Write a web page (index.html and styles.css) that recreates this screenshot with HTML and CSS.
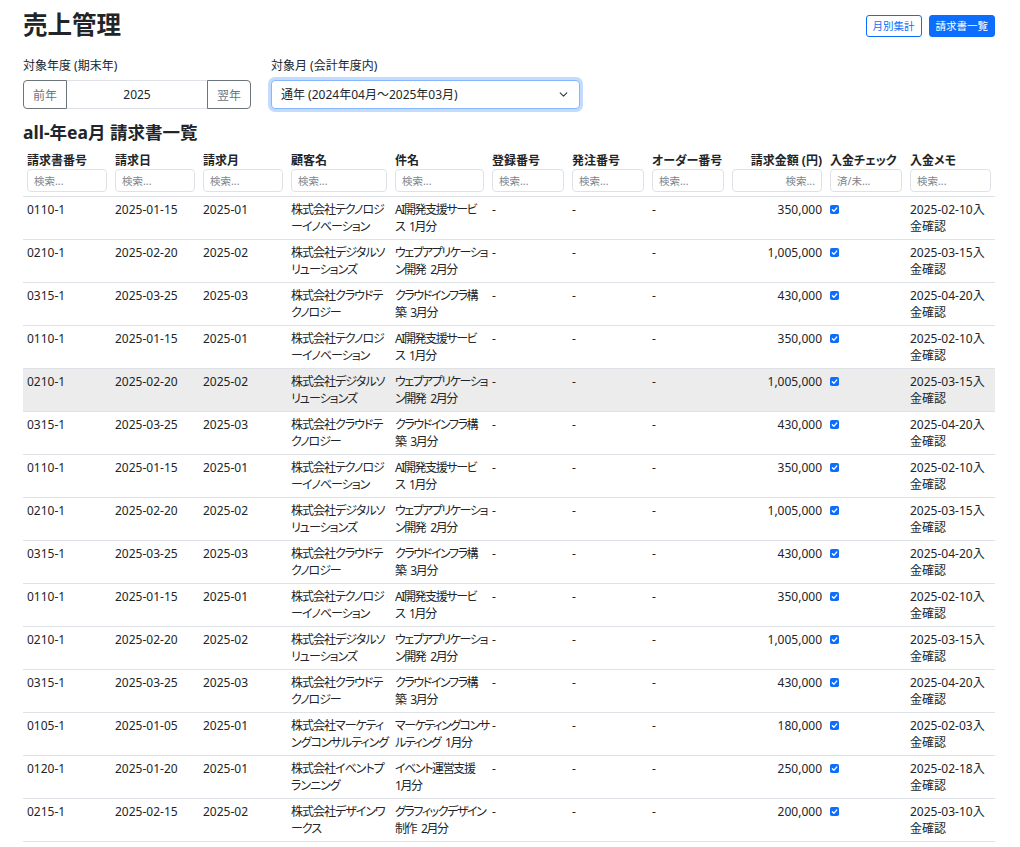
FILE: index.html
```html
<!DOCTYPE html>
<html lang="ja">
<head>
<meta charset="utf-8">
<title>売上管理</title>
<link rel="stylesheet" href="styles.css">
</head>
<body>
<div class="page">
  <header class="topbar">
    <h1 class="title">売上管理</h1>
    <div class="actions">
      <button class="btn btn-outline">月別集計</button>
      <button class="btn btn-primary">請求書一覧</button>
    </div>
  </header>

  <div class="filters">
    <div class="field field-year">
      <label class="label">対象年度 (期末年)</label>
      <div class="year-group">
        <button class="yg-btn yg-prev">前年</button>
        <input class="yg-input" value="2025" readonly>
        <button class="yg-btn yg-next">翌年</button>
      </div>
    </div>
    <div class="field field-month">
      <label class="label">対象月 (会計年度内)</label>
      <select class="month-select"><option>通年 (2024年04月～2025年03月)</option></select>
    </div>
  </div>

  <h2 class="section-title">all-年ea月 請求書一覧</h2>

  <table class="inv-table">
    <colgroup>
      <col class="c-no"><col class="c-date"><col class="c-month"><col class="c-cust"><col class="c-subj">
      <col class="c-reg"><col class="c-po"><col class="c-order"><col class="c-amt"><col class="c-chk"><col class="c-memo">
    </colgroup>
    <thead>
      <tr>
        <th><span class="th-label">請求書番号</span><input class="filter-input" placeholder="検索..."></th>
        <th><span class="th-label">請求日</span><input class="filter-input" placeholder="検索..."></th>
        <th><span class="th-label">請求月</span><input class="filter-input" placeholder="検索..."></th>
        <th><span class="th-label">顧客名</span><input class="filter-input" placeholder="検索..."></th>
        <th><span class="th-label">件名</span><input class="filter-input" placeholder="検索..."></th>
        <th><span class="th-label">登録番号</span><input class="filter-input" placeholder="検索..."></th>
        <th><span class="th-label">発注番号</span><input class="filter-input" placeholder="検索..."></th>
        <th><span class="th-label">オーダー番号</span><input class="filter-input" placeholder="検索..."></th>
        <th class="num"><span class="th-label">請求金額 (円)</span><input class="filter-input filter-num" placeholder="検索..."></th>
        <th><span class="th-label">入金チェック</span><input class="filter-input" placeholder="済/未..."></th>
        <th><span class="th-label">入金メモ</span><input class="filter-input" placeholder="検索..."></th>
      </tr>
    </thead>
    <tbody>
      <tr>
        <td>0110-1</td><td>2025-01-15</td><td>2025-01</td>
        <td class="cust">株式会社テクノロジ<br>ーイノベーション</td>
        <td class="subj">AI開発支援サービ<br>ス 1月分</td>
        <td>-</td><td>-</td><td>-</td><td class="num">350,000</td>
        <td><svg class="chk" viewBox="0 0 10 10"><rect width="10" height="10" rx="2" fill="#0d6efd"/><path d="M2.6 5.3l1.7 1.7 3.2-3.7" fill="none" stroke="#fff" stroke-width="1.4" stroke-linecap="round" stroke-linejoin="round"/></svg></td>
        <td>2025-02-10入<br>金確認</td>
      </tr>
      <tr>
        <td>0210-1</td><td>2025-02-20</td><td>2025-02</td>
        <td class="cust">株式会社デジタルソ<br>リューションズ</td>
        <td class="subj">ウェブアプリケーショ<br>ン開発 2月分</td>
        <td>-</td><td>-</td><td>-</td><td class="num">1,005,000</td>
        <td><svg class="chk" viewBox="0 0 10 10"><rect width="10" height="10" rx="2" fill="#0d6efd"/><path d="M2.6 5.3l1.7 1.7 3.2-3.7" fill="none" stroke="#fff" stroke-width="1.4" stroke-linecap="round" stroke-linejoin="round"/></svg></td>
        <td>2025-03-15入<br>金確認</td>
      </tr>
      <tr>
        <td>0315-1</td><td>2025-03-25</td><td>2025-03</td>
        <td class="cust">株式会社クラウドテ<br>クノロジー</td>
        <td class="subj">クラウドインフラ構<br>築 3月分</td>
        <td>-</td><td>-</td><td>-</td><td class="num">430,000</td>
        <td><svg class="chk" viewBox="0 0 10 10"><rect width="10" height="10" rx="2" fill="#0d6efd"/><path d="M2.6 5.3l1.7 1.7 3.2-3.7" fill="none" stroke="#fff" stroke-width="1.4" stroke-linecap="round" stroke-linejoin="round"/></svg></td>
        <td>2025-04-20入<br>金確認</td>
      </tr>
      <tr>
        <td>0110-1</td><td>2025-01-15</td><td>2025-01</td>
        <td class="cust">株式会社テクノロジ<br>ーイノベーション</td>
        <td class="subj">AI開発支援サービ<br>ス 1月分</td>
        <td>-</td><td>-</td><td>-</td><td class="num">350,000</td>
        <td><svg class="chk" viewBox="0 0 10 10"><rect width="10" height="10" rx="2" fill="#0d6efd"/><path d="M2.6 5.3l1.7 1.7 3.2-3.7" fill="none" stroke="#fff" stroke-width="1.4" stroke-linecap="round" stroke-linejoin="round"/></svg></td>
        <td>2025-02-10入<br>金確認</td>
      </tr>
      <tr class="is-hover">
        <td>0210-1</td><td>2025-02-20</td><td>2025-02</td>
        <td class="cust">株式会社デジタルソ<br>リューションズ</td>
        <td class="subj">ウェブアプリケーショ<br>ン開発 2月分</td>
        <td>-</td><td>-</td><td>-</td><td class="num">1,005,000</td>
        <td><svg class="chk" viewBox="0 0 10 10"><rect width="10" height="10" rx="2" fill="#0d6efd"/><path d="M2.6 5.3l1.7 1.7 3.2-3.7" fill="none" stroke="#fff" stroke-width="1.4" stroke-linecap="round" stroke-linejoin="round"/></svg></td>
        <td>2025-03-15入<br>金確認</td>
      </tr>
      <tr>
        <td>0315-1</td><td>2025-03-25</td><td>2025-03</td>
        <td class="cust">株式会社クラウドテ<br>クノロジー</td>
        <td class="subj">クラウドインフラ構<br>築 3月分</td>
        <td>-</td><td>-</td><td>-</td><td class="num">430,000</td>
        <td><svg class="chk" viewBox="0 0 10 10"><rect width="10" height="10" rx="2" fill="#0d6efd"/><path d="M2.6 5.3l1.7 1.7 3.2-3.7" fill="none" stroke="#fff" stroke-width="1.4" stroke-linecap="round" stroke-linejoin="round"/></svg></td>
        <td>2025-04-20入<br>金確認</td>
      </tr>
      <tr>
        <td>0110-1</td><td>2025-01-15</td><td>2025-01</td>
        <td class="cust">株式会社テクノロジ<br>ーイノベーション</td>
        <td class="subj">AI開発支援サービ<br>ス 1月分</td>
        <td>-</td><td>-</td><td>-</td><td class="num">350,000</td>
        <td><svg class="chk" viewBox="0 0 10 10"><rect width="10" height="10" rx="2" fill="#0d6efd"/><path d="M2.6 5.3l1.7 1.7 3.2-3.7" fill="none" stroke="#fff" stroke-width="1.4" stroke-linecap="round" stroke-linejoin="round"/></svg></td>
        <td>2025-02-10入<br>金確認</td>
      </tr>
      <tr>
        <td>0210-1</td><td>2025-02-20</td><td>2025-02</td>
        <td class="cust">株式会社デジタルソ<br>リューションズ</td>
        <td class="subj">ウェブアプリケーショ<br>ン開発 2月分</td>
        <td>-</td><td>-</td><td>-</td><td class="num">1,005,000</td>
        <td><svg class="chk" viewBox="0 0 10 10"><rect width="10" height="10" rx="2" fill="#0d6efd"/><path d="M2.6 5.3l1.7 1.7 3.2-3.7" fill="none" stroke="#fff" stroke-width="1.4" stroke-linecap="round" stroke-linejoin="round"/></svg></td>
        <td>2025-03-15入<br>金確認</td>
      </tr>
      <tr>
        <td>0315-1</td><td>2025-03-25</td><td>2025-03</td>
        <td class="cust">株式会社クラウドテ<br>クノロジー</td>
        <td class="subj">クラウドインフラ構<br>築 3月分</td>
        <td>-</td><td>-</td><td>-</td><td class="num">430,000</td>
        <td><svg class="chk" viewBox="0 0 10 10"><rect width="10" height="10" rx="2" fill="#0d6efd"/><path d="M2.6 5.3l1.7 1.7 3.2-3.7" fill="none" stroke="#fff" stroke-width="1.4" stroke-linecap="round" stroke-linejoin="round"/></svg></td>
        <td>2025-04-20入<br>金確認</td>
      </tr>
      <tr>
        <td>0110-1</td><td>2025-01-15</td><td>2025-01</td>
        <td class="cust">株式会社テクノロジ<br>ーイノベーション</td>
        <td class="subj">AI開発支援サービ<br>ス 1月分</td>
        <td>-</td><td>-</td><td>-</td><td class="num">350,000</td>
        <td><svg class="chk" viewBox="0 0 10 10"><rect width="10" height="10" rx="2" fill="#0d6efd"/><path d="M2.6 5.3l1.7 1.7 3.2-3.7" fill="none" stroke="#fff" stroke-width="1.4" stroke-linecap="round" stroke-linejoin="round"/></svg></td>
        <td>2025-02-10入<br>金確認</td>
      </tr>
      <tr>
        <td>0210-1</td><td>2025-02-20</td><td>2025-02</td>
        <td class="cust">株式会社デジタルソ<br>リューションズ</td>
        <td class="subj">ウェブアプリケーショ<br>ン開発 2月分</td>
        <td>-</td><td>-</td><td>-</td><td class="num">1,005,000</td>
        <td><svg class="chk" viewBox="0 0 10 10"><rect width="10" height="10" rx="2" fill="#0d6efd"/><path d="M2.6 5.3l1.7 1.7 3.2-3.7" fill="none" stroke="#fff" stroke-width="1.4" stroke-linecap="round" stroke-linejoin="round"/></svg></td>
        <td>2025-03-15入<br>金確認</td>
      </tr>
      <tr>
        <td>0315-1</td><td>2025-03-25</td><td>2025-03</td>
        <td class="cust">株式会社クラウドテ<br>クノロジー</td>
        <td class="subj">クラウドインフラ構<br>築 3月分</td>
        <td>-</td><td>-</td><td>-</td><td class="num">430,000</td>
        <td><svg class="chk" viewBox="0 0 10 10"><rect width="10" height="10" rx="2" fill="#0d6efd"/><path d="M2.6 5.3l1.7 1.7 3.2-3.7" fill="none" stroke="#fff" stroke-width="1.4" stroke-linecap="round" stroke-linejoin="round"/></svg></td>
        <td>2025-04-20入<br>金確認</td>
      </tr>
      <tr>
        <td>0105-1</td><td>2025-01-05</td><td>2025-01</td>
        <td class="cust">株式会社マーケティ<br>ングコンサルティング</td>
        <td class="subj">マーケティングコンサ<br>ルティング 1月分</td>
        <td>-</td><td>-</td><td>-</td><td class="num">180,000</td>
        <td><svg class="chk" viewBox="0 0 10 10"><rect width="10" height="10" rx="2" fill="#0d6efd"/><path d="M2.6 5.3l1.7 1.7 3.2-3.7" fill="none" stroke="#fff" stroke-width="1.4" stroke-linecap="round" stroke-linejoin="round"/></svg></td>
        <td>2025-02-03入<br>金確認</td>
      </tr>
      <tr>
        <td>0120-1</td><td>2025-01-20</td><td>2025-01</td>
        <td class="cust">株式会社イベントプ<br>ランニング</td>
        <td class="subj">イベント運営支援<br>1月分</td>
        <td>-</td><td>-</td><td>-</td><td class="num">250,000</td>
        <td><svg class="chk" viewBox="0 0 10 10"><rect width="10" height="10" rx="2" fill="#0d6efd"/><path d="M2.6 5.3l1.7 1.7 3.2-3.7" fill="none" stroke="#fff" stroke-width="1.4" stroke-linecap="round" stroke-linejoin="round"/></svg></td>
        <td>2025-02-18入<br>金確認</td>
      </tr>
      <tr>
        <td>0215-1</td><td>2025-02-15</td><td>2025-02</td>
        <td class="cust">株式会社デザインワ<br>ークス</td>
        <td class="subj">グラフィックデザイン<br>制作 2月分</td>
        <td>-</td><td>-</td><td>-</td><td class="num">200,000</td>
        <td><svg class="chk" viewBox="0 0 10 10"><rect width="10" height="10" rx="2" fill="#0d6efd"/><path d="M2.6 5.3l1.7 1.7 3.2-3.7" fill="none" stroke="#fff" stroke-width="1.4" stroke-linecap="round" stroke-linejoin="round"/></svg></td>
        <td>2025-03-10入<br>金確認</td>
      </tr>
    </tbody>
  </table>
</div>
</body>
</html>
```

FILE: styles.css
```css
* { box-sizing: border-box; }

body {
  margin: 0;
  background: #fff;
  color: #212529;
  font-family: "Noto Sans", "Noto Sans CJK JP", sans-serif;
  font-feature-settings: "palt";
}

.page {
  padding: 10px 25px 0 23px;
}

/* ---------- top bar ---------- */
.topbar {
  display: flex;
  justify-content: space-between;
  align-items: flex-start;
}

.title {
  margin: 0;
  font-size: 24.5px;
  line-height: 29px;
  font-weight: 700;
}

.actions {
  display: flex;
  gap: 7px;
  margin-top: 5px;
}

.btn {
  font: inherit;
  font-size: 10.5px;
  line-height: 20px;
  padding: 0 6px;
  border-radius: 3px;
  border: 1px solid #0d6efd;
  cursor: pointer;
}

.btn-outline { background: #fff; color: #0d6efd; }
.btn-primary { background: #0d6efd; color: #fff; }

/* ---------- filters ---------- */
.filters {
  display: flex;
  gap: 20px;
  margin-top: 18px;
}

.field-year { width: 228px; }

.label {
  display: block;
  font-size: 12px;
  line-height: 17px;
  margin-bottom: 6px;
}

.year-group {
  display: flex;
  height: 29px;
}

.yg-btn {
  font: inherit;
  font-size: 12px;
  color: #6c757d;
  background: #fff;
  border: 1px solid #6c757d;
  padding: 0 9px;
}

.yg-prev { border-radius: 4px 0 0 4px; }
.yg-next { border-radius: 0 4px 4px 0; }

.yg-input {
  flex: 1;
  min-width: 0;
  border: 1px solid #dee2e6;
  border-left: 0;
  border-right: 0;
  text-align: center;
  font: inherit;
  font-size: 12px;
  color: #212529;
  background: #fff;
}

.month-select {
  appearance: none;
  -webkit-appearance: none;
  width: 309px;
  height: 29px;
  border: 1px solid #86b7fe;
  border-radius: 4px;
  box-shadow: 0 0 0 3px rgba(13, 110, 253, 0.25);
  padding: 0 26px 0 9px;
  font: inherit;
  font-size: 12px;
  color: #212529;
  background: #fff url("data:image/svg+xml,%3csvg xmlns='http://www.w3.org/2000/svg' viewBox='0 0 10 6'%3e%3cpath d='M1 1l4 4 4-4' fill='none' stroke='%23343a40' stroke-width='1.3' stroke-linecap='round' stroke-linejoin='round'/%3e%3c/svg%3e") no-repeat right 11px center / 9px 5px;
  outline: none;
}

/* ---------- section ---------- */
.section-title {
  margin: 13px 0 5px;
  font-size: 17.5px;
  line-height: 21px;
  font-weight: 700;
}

/* ---------- table ---------- */
.inv-table {
  width: 100%;
  border-collapse: collapse;
  table-layout: fixed;
  font-size: 12px;
  line-height: 17px;
}

.c-no, .c-date, .c-month { width: 88px; }
.c-cust { width: 104px; }
.c-subj { width: 97px; }
.c-reg, .c-po, .c-order, .c-chk { width: 80px; }
.c-amt { width: 98px; }
.c-memo { width: 89px; }

.inv-table th,
.inv-table td {
  padding: 4px;
  text-align: left;
  vertical-align: top;
  border-bottom: 1px solid #dee2e6;
}

.inv-table th { font-weight: 700; }

.th-label { display: block; white-space: nowrap; }

.filter-input {
  display: block;
  width: 100%;
  height: 23px;
  border: 1px solid #dee2e6;
  border-radius: 4px;
  padding: 0 6px;
  font: inherit;
  font-size: 10.5px;
  font-weight: 400;
  color: #212529;
  background: #fff;
}

.filter-input::placeholder { color: #7d858c; }

.inv-table .num { text-align: right; }
.filter-num { text-align: right; }

.inv-table .cust {
  white-space: nowrap;
  letter-spacing: -1px;
}

.inv-table .subj {
  white-space: nowrap;
  letter-spacing: -1.4px;
  word-spacing: 3px;
}

.inv-table tr.is-hover td { background: #ececec; }

.chk {
  display: block;
  width: 9px;
  height: 9px;
  margin-top: 4px;
}
```
